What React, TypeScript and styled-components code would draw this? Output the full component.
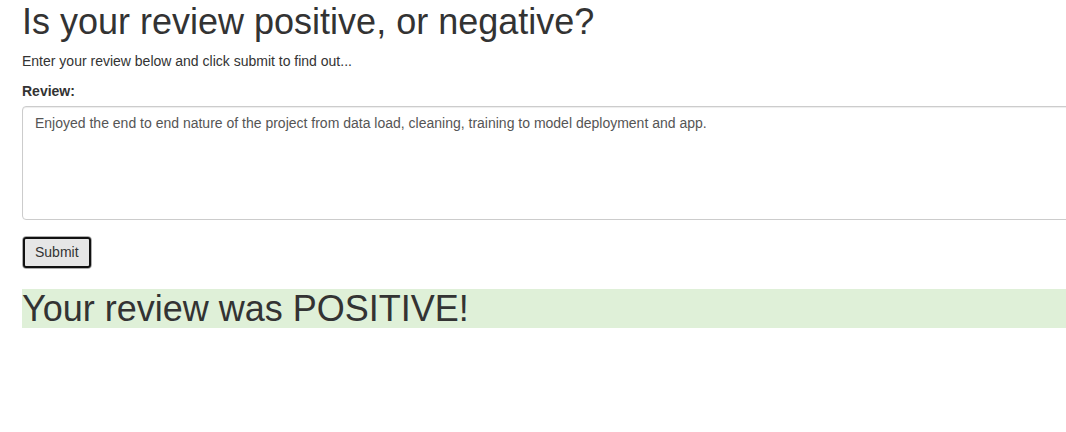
import styled, { createGlobalStyle } from 'styled-components';

const GlobalStyle = createGlobalStyle`
    html, body {
        margin: 0;
        padding: 0;
        overflow: hidden;
        background: #fff;
    }
    body {
        font-family: "Liberation Sans", Arial, sans-serif;
        font-size: 14px;
        line-height: 20px;
        color: #333;
    }
`

const App = () => {
    return (
        <Page>
            <GlobalStyle />
            <Container>
                <Title>Is your review positive, or negative?</Title>
                <Lead>Enter your review below and click submit to find out...</Lead>
                <Form onSubmit={(e) => e.preventDefault()}>
                    <Label htmlFor="review">Review:</Label>
                    <TextArea
                        id="review"
                        defaultValue="Enjoyed the end to end nature of the project from data load, cleaning, training to model deployment and app."
                    />
                    <SubmitButton type="submit">Submit</SubmitButton>
                </Form>
                <ResultBox>Your review was POSITIVE!</ResultBox>
            </Container>
        </Page>
    )
}

const Page = styled.div`
    width: 1200px;
`

const Container = styled.div`
    padding: 0 22px;
`

const Title = styled.h1`
    margin: 2px 0 0;
    font-size: 36px;
    font-weight: 400;
    line-height: 1.1;
    color: #333;
`

const Lead = styled.p`
    margin: 9px 0 10px;
`

const Form = styled.form`
    display: flex;
    flex-direction: column;
    align-items: flex-start;
`

const Label = styled.label`
    font-weight: 700;
    margin-bottom: 5px;
`

const TextArea = styled.textarea`
    box-sizing: border-box;
    width: 100%;
    height: 114px;
    padding: 6px 12px;
    border: 1px solid #ccc;
    border-radius: 4px;
    box-shadow: inset 0 1px 1px rgba(0, 0, 0, 0.075);
    font-family: inherit;
    font-size: 14px;
    line-height: 20px;
    color: #555;
    resize: none;
    outline: none;
`

const SubmitButton = styled.button`
    margin-top: 16px;
    box-sizing: border-box;
    height: 33px;
    padding: 0 12px;
    font-family: inherit;
    font-size: 14px;
    color: #333;
    background: #e6e6e6;
    border: 1px solid #adadad;
    border-radius: 4px;
    outline: 2px solid #111;
    outline-offset: -3px;
    cursor: pointer;
`

const ResultBox = styled.div`
    margin-top: 20px;
    background: #dff0d8;
    font-size: 36px;
    line-height: 1.1;
    color: #333;
`

export default App;
